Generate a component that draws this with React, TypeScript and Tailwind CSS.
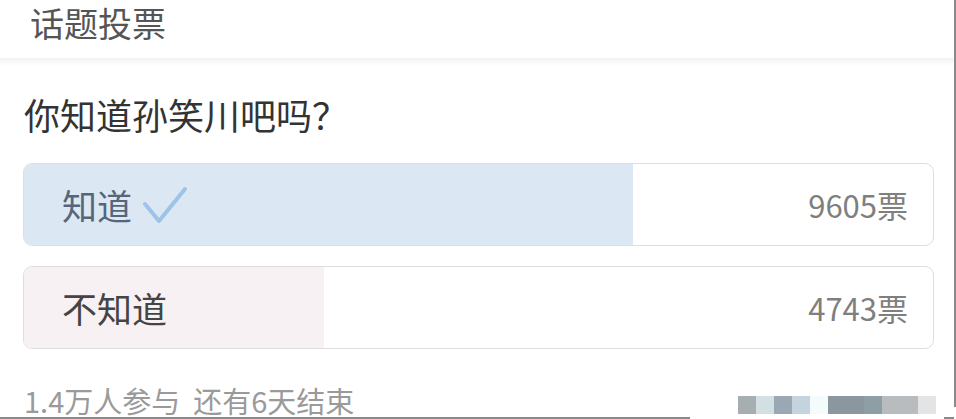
const font = { fontFamily: '"Noto Sans CJK SC", "Noto Sans", sans-serif' };

type Option = {
  label: string;
  votes: number;
  fill: string;
  text: string;
  checked?: boolean;
};

const options: Option[] = [
  { label: "知道", votes: 9605, fill: "bg-[#dce7f4]", text: "text-[#56667a]", checked: true },
  { label: "不知道", votes: 4743, fill: "bg-[#f7f1f3]", text: "text-[#444444]" },
];

const total = options.reduce((s, o) => s + o.votes, 0);

// the blurred-out blocks in the bottom corner
const mosaic = [
  "w-[18px] bg-[#a6aeb1]",
  "w-[18px] bg-[#d3e0e3]",
  "w-[18px] bg-[#9aa8b5]",
  "w-[18px] bg-[#c4d4df]",
  "w-[18px] bg-[#f4fbfb]",
  "w-[36px] bg-[#8b979e]",
  "w-[18px] bg-[#8d9fa5]",
  "w-[36px] bg-[#b9bcbe]",
  "w-[18px] bg-[#e3e4e6]",
];

const Check = () => (
  <svg width="44" height="38" viewBox="0 0 44 38" className="ml-[11px]">
    <path
      d="M2 18 L16 35 L42 3"
      fill="none"
      stroke="#9dc3e9"
      strokeWidth="4"
      strokeLinecap="round"
      strokeLinejoin="round"
    />
  </svg>
);

const OptionRow = ({ option }: { option: Option }) => {
  const pct = (option.votes / total) * 100;
  return (
    <div className="relative ml-[23px] h-[83px] w-[911px] overflow-hidden rounded-[9px] border border-[#dedede] bg-white">
      <div className={`absolute inset-y-0 left-0 ${option.fill}`} style={{ width: `${pct}%` }}></div>
      <div className="relative flex h-full flex-row items-center justify-between pl-[38px] pr-[25px]">
        <div className="flex flex-row items-center">
          <p className={`text-[35px] leading-[40px] ${option.text}`}>{option.label}</p>
          {option.checked && <Check />}
        </div>
        <p className="text-[31px] leading-[36px] text-[#7f7f7f]">{option.votes}票</p>
      </div>
    </div>
  );
};

const App = () => {
  return (
    <div style={font} className="flex h-[419px] w-[956px] flex-row overflow-hidden bg-white">
      <div className="flex w-[954px] flex-col">
        <div className="h-[58px] pl-[30px] pt-[3px]">
          <p className="text-[34px] leading-[40px] text-[#555555]">话题投票</p>
        </div>
        <div className="h-[8px] bg-gradient-to-b from-[#f2f2f2] to-white"></div>
        <p className="mt-[28px] pl-[24px] text-[36px] leading-[40px] text-[#333333]">你知道孙笑川吧吗？</p>
        <div className="mt-[29px] flex flex-col gap-[20px]">
          {options.map((o) => (
            <OptionRow key={o.label} option={o} />
          ))}
        </div>
        <div className="mt-[35px] flex h-[32px] flex-row justify-between pl-[24px] pr-[18px]">
          <p className="text-[29px] leading-[32px] text-[#9a9a9a]">
            1.4万人参与&nbsp;&nbsp;还有6天结束
          </p>
          <div className="mt-[12px] flex h-[18px] flex-row">
            {mosaic.map((c, i) => (
              <div key={i} className={c}></div>
            ))}
          </div>
        </div>
        <div className="mt-auto flex h-[2px] flex-row justify-between">
          <div className="h-[2px] w-[690px] bg-[#8a8a8a]"></div>
          <div className="h-[2px] w-[10px] bg-[#8a8a8a]"></div>
        </div>
      </div>
      <div className="mb-[12px] w-[2px] bg-[#8a8a8a]"></div>
    </div>
  );
};

export default App;
